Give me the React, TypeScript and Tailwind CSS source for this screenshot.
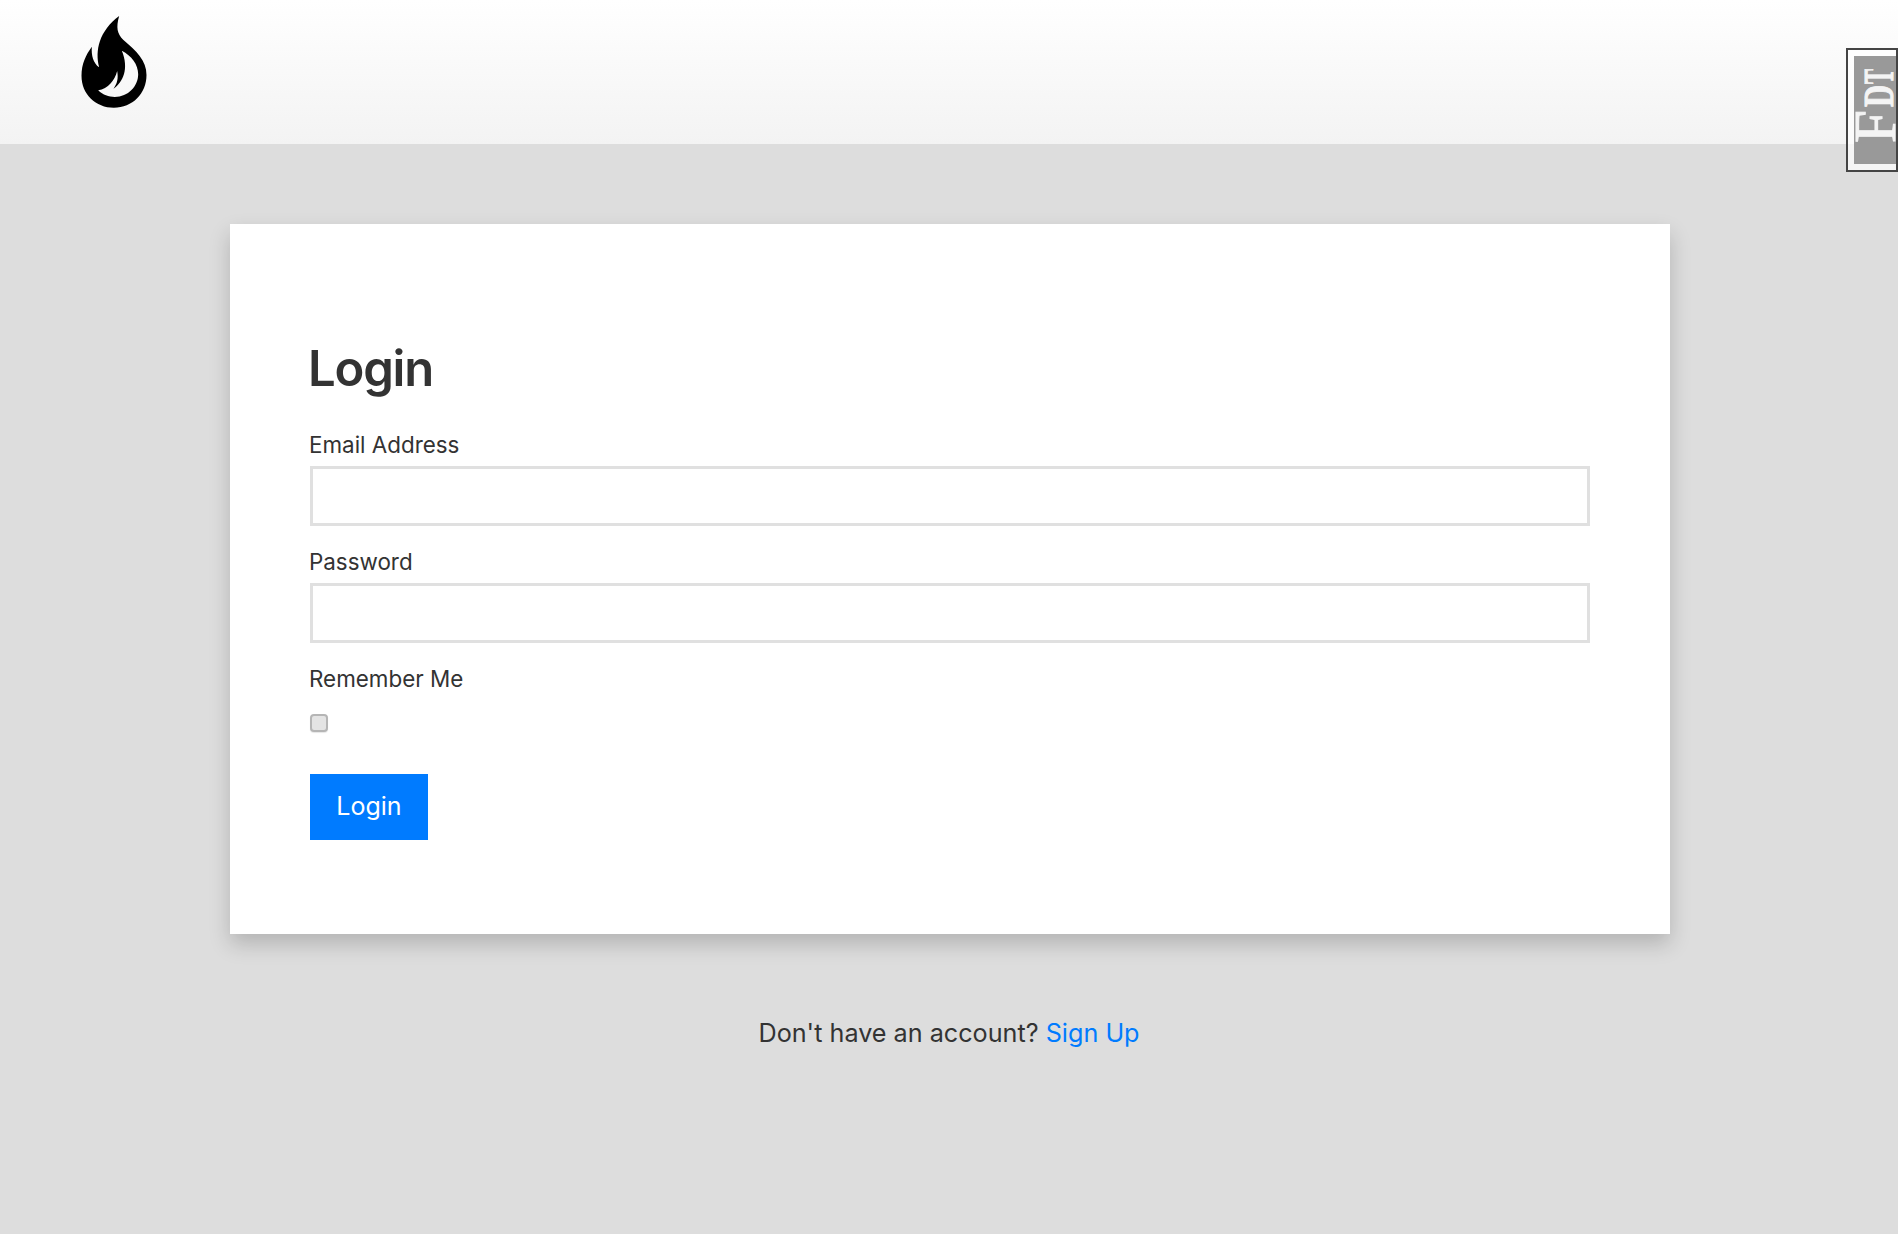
export default function App() {
  return (
    <div className="relative min-h-screen bg-[#dddddd] font-['Inter',sans-serif] text-[#333]">
      {/* Header */}
      <header className="h-[144px] bg-gradient-to-b from-white to-[#f3f3f3] pl-[80px] pt-[16px]">
        <svg width="68" height="92" viewBox="125 47 195 276" className="block">
          <path
            fillRule="evenodd"
            d="M238 47C228 82 232 100 250 118C290 152 320 180 320 224C320 280 278 322 222 322C168 322 125 282 125 226C125 190 138 164 156 139C154 165 160 188 178 201C165 150 178 92 238 47ZM246 151C275 166 295 192 295 222C295 258 265 290 225 290C206 290 190 284 175 270C205 265 225 240 232 212C236 235 232 250 221 265C250 245 268 205 246 151Z"
            fill="#000"
          />
        </svg>
      </header>

      {/* Debug toolbar handle */}
      <div className="absolute right-0 top-[48px] h-[124px] w-[52px] border-2 border-[#444] bg-white/70 py-[6px] pl-[6px]">
        <div className="flex h-[108px] w-full items-center justify-center overflow-hidden bg-[#999]">
          <div className="flex h-[40px] w-[74px] shrink-0 -translate-y-[4px] -rotate-90 items-baseline font-['Liberation_Serif',serif] text-[#f4f4f4]">
            <span className="inline-block w-[36px] text-[59px] leading-[40px] [-webkit-text-stroke:1px_#f4f4f4]">F</span>
            <span className="inline-block w-[23px] origin-left -translate-y-[2px] scale-x-[0.73] text-[42px] leading-[40px] font-bold [-webkit-text-stroke:1px_#f4f4f4]">D</span>
            <span className="inline-block w-[15px] origin-left -translate-y-[2px] scale-x-[0.54] text-[42px] leading-[40px] font-bold [-webkit-text-stroke:1px_#f4f4f4]">T</span>
          </div>
        </div>
      </div>

      <main className="flex flex-col items-center pt-[80px] pl-[2px]">
        <div className="w-[1440px] bg-white px-[80px] pt-[115px] pb-[94px] shadow-[0_10px_20px_rgba(0,0,0,0.19)]">
          <h1 className="mb-[31px] -ml-[2px] text-[49px] leading-[60px] font-semibold tracking-[-1.2px] text-[#333]">Login</h1>
          <form>
            <label className="mb-[6px] -ml-[1px] block text-[22.4px] leading-[30px] text-[#333]">Email Address</label>
            <input className="mb-[21px] block h-[60px] w-full border-[3px] border-[#e0e0e0] bg-white" type="email" />
            <label className="mb-[6px] -ml-[1px] block text-[22.4px] leading-[30px] text-[#333]">Password</label>
            <input className="mb-[21px] block h-[60px] w-full border-[3px] border-[#e0e0e0] bg-white" type="password" />
            <label className="mb-[20px] -ml-[1px] block text-[22.4px] leading-[30px] text-[#333]">Remember Me</label>
            <div className="mb-[42px] h-[18px] w-[18px] rounded-[4px] border-2 border-[#b5b5b5] bg-[#e4e4e4] shadow-[0_1px_1px_rgba(0,0,0,0.1)]" />
            <button className="h-[66px] w-[118px] bg-[#007bff] text-[25px] font-normal text-white" type="button">Login</button>
          </form>
        </div>
        <p className="mt-[81px] -ml-[2px] text-[25.2px] leading-[36px] text-[#333]">
          Don't have an account? <a className="text-[#007bff]" href="#">Sign Up</a>
        </p>
      </main>
    </div>
  )
}
